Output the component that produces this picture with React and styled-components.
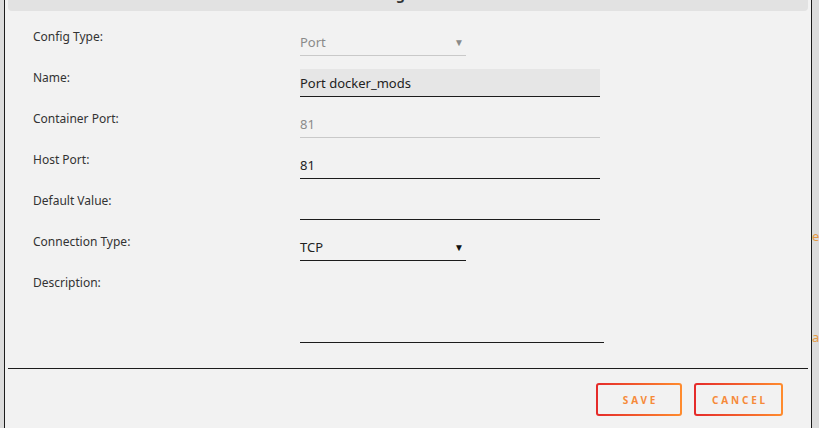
import styled, { createGlobalStyle } from "styled-components";

const Global = createGlobalStyle`
  html, body {
    margin: 0;
    padding: 0;
    background: #dcdcdc;
    overflow: hidden;
  }
  body {
    font-family: "Noto Sans", "Open Sans", sans-serif;
  }
`;

// PAGE: MODAL IN THE MIDDLE, BACKGROUND PAGE PEEKING ON THE RIGHT
const Page = styled.div`
  display: flex;
  width: 819px;
  height: 428px;
  overflow: hidden;
`;
const LeftEdge = styled.div`
  width: 4px;
  flex-shrink: 0;
`;
const Behind = styled.div`
  flex: 1;
  overflow: hidden;
  padding: 228px 0 0 0;
  display: flex;
  flex-direction: column;
  gap: 84px;
  color: #e39945;
  font-size: 13px;
  line-height: 17px;
  white-space: nowrap;
`;
const Modal = styled.div`
  width: 806px;
  flex-shrink: 0;
  margin-top: -30px;
  background: #f2f2f2;
  border-left: 1px solid #1c1c1c;
  border-right: 1px solid #1c1c1c;
  display: flex;
  flex-direction: column;
`;
const Header = styled.div`
  margin: 0 3px;
  height: 41px;
  background: #e2e2e2;
  border-radius: 0 0 4px 4px;
  display: flex;
  justify-content: center;
  padding-top: 16px;
  box-sizing: border-box;
  font-size: 14px;
  font-weight: 700;
  color: #333;
  line-height: 18px;
  overflow: hidden;
`;
const Form = styled.div`
  padding: 17px 0 0 28px;
  display: flex;
  flex-direction: column;
  gap: 13px;
`;
const Row = styled.div`
  display: grid;
  grid-template-columns: 267px 1fr;
  align-items: start;
`;
const Label = styled.div`
  font-size: 12px;
  line-height: 16px;
  padding-top: 1px;
  color: #333;
`;
const Field = styled.div`
  width: ${(p) => p.$w}px;
  height: ${(p) => p.$h || 28}px;
  box-sizing: border-box;
  border-bottom: 1px solid ${(p) => (p.$muted ? "#c9c9c9" : "#1c1c1c")};
  background: ${(p) => (p.$filled ? "#e6e6e6" : "transparent")};
  display: flex;
  align-items: ${(p) => (p.$top ? "flex-start" : "center")};
  justify-content: space-between;
  font-size: 13px;
  color: ${(p) => (p.$muted ? "#8a8a8a" : "#222")};
  padding-right: 2px;
`;
const Arrow = styled.span`
  font-size: 10px;
  color: ${(p) => (p.$muted ? "#8a8a8a" : "#111")};
`;
const Divider = styled.div`
  margin: 25px 3px 0;
  height: 1px;
  background: #1c1c1c;
`;
const Actions = styled.div`
  display: flex;
  justify-content: flex-end;
  gap: 12px;
  padding: 14px 28px 0 0;
`;
const Button = styled.button`
  width: ${(p) => p.$w}px;
  height: 33px;
  border: 2px solid transparent;
  border-radius: 3px;
  background: linear-gradient(#f2f2f2, #f2f2f2) padding-box,
    linear-gradient(90deg, #e52a2a, #ff8c2e) border-box;
  font-family: "Noto Sans", sans-serif;
  font-size: 10px;
  font-weight: 700;
  letter-spacing: 2.8px;
  color: #f68a3a;
  padding: 0 0 0 3px;
  cursor: pointer;
`;

const rows = [
  { label: "Config Type:", value: "Port", w: 166, muted: true, select: true },
  { label: "Name:", value: "Port docker_mods", w: 300, filled: true },
  { label: "Container Port:", value: "81", w: 300, muted: true },
  { label: "Host Port:", value: "81", w: 300 },
  { label: "Default Value:", value: "", w: 300 },
  { label: "Connection Type:", value: "TCP", w: 166, select: true },
];

const App = () => {
  return (
    <Page>
      <Global />
      <LeftEdge />
      <Modal>
        <Header>Configuration</Header>
        <Form>
          {rows.map((r) => (
            <Row key={r.label}>
              <Label>{r.label}</Label>
              <Field $w={r.w} $muted={r.muted} $filled={r.filled}>
                <span>{r.value}</span>
                {r.select && <Arrow $muted={r.muted}>▼</Arrow>}
              </Field>
            </Row>
          ))}
          <Row>
            <Label>Description:</Label>
            <Field $w={304} $h={69} $top />
          </Row>
        </Form>
        <Divider />
        <Actions>
          <Button $w={86}>SAVE</Button>
          <Button $w={89}>CANCEL</Button>
        </Actions>
      </Modal>
      <Behind>
        <span>er</span>
        <span>a</span>
      </Behind>
    </Page>
  );
};

export default App;
